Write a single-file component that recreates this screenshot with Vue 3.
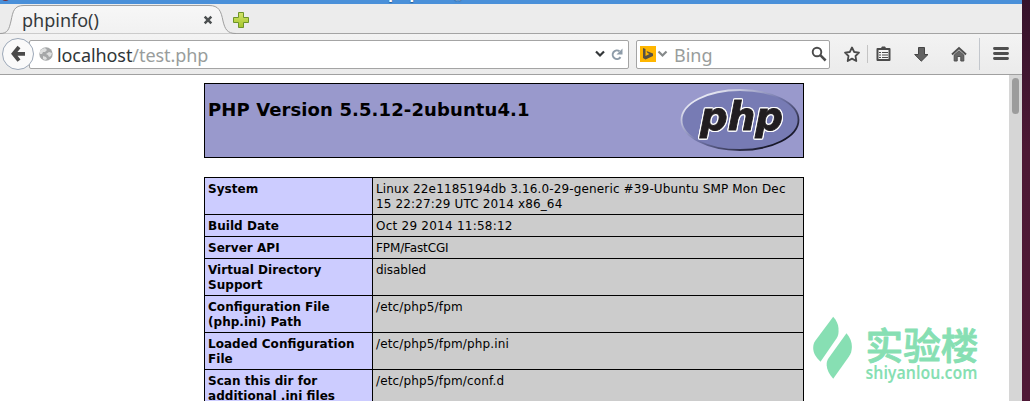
<script setup>
const rows = [
  ['System', 'Linux 22e1185194db 3.16.0-29-generic #39-Ubuntu SMP Mon Dec 15 22:27:29 UTC 2014 x86_64'],
  ['Build Date', 'Oct 29 2014 11:58:12'],
  ['Server API', 'FPM/FastCGI'],
  ['Virtual Directory Support', 'disabled'],
  ['Configuration File (php.ini) Path', '/etc/php5/fpm'],
  ['Loaded Configuration File', '/etc/php5/fpm/php.ini'],
  ['Scan this dir for additional .ini files', '/etc/php5/fpm/conf.d'],
]
</script>

<template>
  <div class="desktop">
    <div class="window">
      <div class="titlebar"><i class="close-dot"></i><span class="title">phpinfo()</span></div>

      <div class="tabs">
        <svg class="tab-shape" width="260" height="30" viewBox="0 0 260 30">
          <defs>
            <linearGradient id="tabFill" x1="0" y1="0" x2="0" y2="1">
              <stop offset="0" stop-color="#f7f7f7" /><stop offset="1" stop-color="#f1f1f1" />
            </linearGradient>
            <linearGradient id="plusFill" x1="0" y1="0" x2="0" y2="1">
              <stop offset="0" stop-color="#d3e36a" /><stop offset="1" stop-color="#a5c62c" />
            </linearGradient>
          </defs>
          <path d="M0 29.5C8 29.5 9 25 11 17C13 7 14 1.500 24 1.500H209C219 1.500 221 7 223 17C225 25 227 29.500 236 29.500" fill="url(#tabFill)" stroke="#9e9e9e" />
          <path d="M204.700 12.700L211.300 19.300M211.300 12.700L204.700 19.300" stroke="#4b4f50" stroke-width="2.500" />
          <path d="M238.500 8.500h5v5h5v5h-5v5h-5v-5h-5v-5h5z" fill="url(#plusFill)" stroke="#6d9428" />
        </svg>
        <span class="tab-label">phpinfo()</span>
      </div>

      <div class="toolbar">
        <svg class="back" width="34" height="34" viewBox="0 0 34 34">
          <circle cx="17" cy="17" r="15.500" fill="#fafafa" stroke="#9ca8b8" />
          <path d="M18 10L12.500 16.800L18 23.600M13 16.800H24" fill="none" stroke="#4a4a4a" stroke-width="3.800" />
        </svg>
        <div class="urlbar">
          <svg class="globe" width="14" height="14" viewBox="0 0 14 14">
            <circle cx="7" cy="7" r="6.700" fill="#a5a7a8" />
            <path d="M1 4L3 2L6 1L8 3L6 5L4 5L3 7L1 7ZM7 7L10 5L13 6L12 9L10 10L9 8ZM4 9L7 10L8 12L6 13L4 12Z" fill="#dedfdf" />
          </svg>
          <span class="url">localhost<span class="path">/test.php</span></span>
          <svg class="url-icons" width="30" height="16" viewBox="0 0 30 16">
            <path d="M1 5.500L5 9.500L9 5.500" fill="none" stroke="#333739" stroke-width="2.200" />
            <path d="M24.500 5.200A4.300 4.300 0 1 0 25.500 11.200" fill="none" stroke="#8d9ba8" stroke-width="2" />
            <path d="M27.500 2.500V8.500H21.500Z" fill="#8d9ba8" />
          </svg>
        </div>
        <div class="search">
          <svg width="28" height="16" viewBox="0 0 28 16">
            <path d="M0 0H16V16H0Z" fill="#ffb600" />
            <path d="M3 2L5.500 3V10L9.500 8L7.500 7L6.500 5L13 7.500V10L5.500 13.500L3 12Z" fill="#565144" />
            <path d="M18.500 5.500L22.500 9.500L26.500 5.500" fill="none" stroke="#85898a" stroke-width="2.200" />
          </svg>
          <span class="engine">Bing</span>
          <svg class="lens" width="16" height="17" viewBox="0 0 16 17">
            <circle cx="6" cy="6" r="4.300" fill="none" stroke="#4b4b4b" stroke-width="1.900" />
            <path d="M9.300 9.200L14.600 14.500" stroke="#4b4b4b" stroke-width="2.500" />
          </svg>
        </div>
        <svg class="tools" width="192" height="34" viewBox="0 0 192 34">
          <path d="M22 10.500L24.200 15L29 15.700L25.500 19L26.300 24L22 21.600L17.700 24L18.500 19L15 15.700L19.800 15Z" fill="#f8f8f8" stroke="#4b4b4b" stroke-width="1.800" stroke-linejoin="round" />
          <path d="M37.500 8V26" stroke="#c4c4c4" />
          <path d="M47.500 12H59.500V23H47.500Z" fill="#f4f4f4" stroke="#4b4b4b" stroke-width="2" stroke-linejoin="round" />
          <path d="M49.500 11.500V11H51L52 9.500H55L56 11H57.500V13H49.500Z" fill="#4b4b4b" />
          <path d="M49 15.500H51M52 15.500H58M49 18H51M52 18H58M49 20.500H51M52 20.500H58" stroke="#4b4b4b" stroke-width="1.200" />
          <path d="M88.500 10.500H94.500V17.500H98L91.300 24.200L84.700 17.500H88.500Z" fill="#626262" stroke="#454545" />
          <path d="M122 17.500L129 11L136 17.500" fill="none" stroke="#4f4f4f" stroke-width="2" />
          <path d="M124.200 18L129 13.700L133.800 18V24H130.800V19.500H127.200V24H124.200Z" fill="#686868" stroke="#4f4f4f" />
          <path d="M149.500 1V33" stroke="#c3c7cd" />
          <path d="M164.500 11.500H177.500M164.500 16.500H177.500M164.500 21.500H177.500" stroke="#4f4f4f" stroke-width="2.900" stroke-linecap="round" />
        </svg>
      </div>

      <div class="viewport">
        <div class="page">
          <div class="banner">
            <h1>PHP Version 5.5.12-2ubuntu4.1</h1>
            <svg width="120" height="64" viewBox="0 0 120 64">
              <defs>
                <linearGradient id="rim" x1="0" y1="0" x2="1" y2="1">
                  <stop offset="0.150" stop-color="#e6e7f2" /><stop offset="0.480" stop-color="#7478ad" /><stop offset="0.850" stop-color="#171728" />
                </linearGradient>
              </defs>
              <ellipse cx="60" cy="32" rx="58.500" ry="30" fill="#777bb4" stroke="url(#rim)" stroke-width="1.800" />
              <text class="php" x="20" y="41.800" textLength="83" lengthAdjust="spacingAndGlyphs">php</text>
            </svg>
          </div>
          <table>
            <tbody>
              <tr v-for="row in rows" :key="row[0]">
                <th>{{ row[0] }}</th>
                <td>{{ row[1] }}</td>
              </tr>
            </tbody>
          </table>
        </div>
        <div class="scrollbar"><div class="thumb"></div></div>
      </div>
    </div>

    <svg class="watermark" width="170" height="70" viewBox="0 0 170 70">
      <path d="M22.200 0.700C25.500 4.500 27.300 8 27.500 12.500C27.700 17 27.500 19.500 25.500 22.500L9.500 45.700C5 41.500 2.200 37 2.200 32C2.200 28.500 2.800 27 4.500 24.500Z" />
      <path d="M35.500 17.300C39 21.500 41 26 40.900 31C40.700 35 40 37.500 38 40.500L22.200 62.700C18 58 16 54 15.700 49.500C15.500 46 16 44.500 17.700 42Z" />
      <text class="cn" x="54.500" y="44" textLength="113" lengthAdjust="spacingAndGlyphs">实验楼</text>
      <text class="domain" x="54.500" y="63" textLength="112" lengthAdjust="spacingAndGlyphs">shiyanlou.com</text>
    </svg>
  </div>
</template>

<style>
body { margin: 0; overflow: hidden; }
</style>

<style scoped>
.desktop {
  position: relative;
  width: 1030px;
  height: 401px;
  overflow: hidden;
  background: linear-gradient(#36132c, #4d1835 150px, #4f1836);
}
.window { width: 1022px; height: 401px; display: flex; flex-direction: column; background: #ececec; }
.titlebar { position: relative; height: 4px; flex: none; overflow: hidden; background: #4a90d9; }
.title {
  position: absolute; left: 388px; bottom: 2px;
  font: bold 16.500px/20px "Open Sans", sans-serif; color: #fff; text-shadow: 0 1px 1px #285a91;
}
.close-dot { position: absolute; left: 0; bottom: 3px; width: 11px; height: 12px; border-radius: 50%; background: #762b39; }
.tabs { position: relative; height: 30px; flex: none; box-sizing: border-box; border-bottom: 1px solid #a4a4a4; }
.tab-shape { display: block; }
.tab-label { position: absolute; left: 22px; top: 4px; font: 18px/25px "Noto Sans", sans-serif; color: #353a3c; }
.toolbar {
  height: 41px; flex: none; box-sizing: border-box; display: flex; align-items: center;
  border-bottom: 1px solid #a0a0a0; background: linear-gradient(#f3f3f3, #ebebeb);
}
.back { flex: none; margin-left: 1px; position: relative; z-index: 1; }
.urlbar, .search {
  box-sizing: border-box; height: 29px; display: flex; align-items: center;
  background: #fff; border: 1px solid #a4a4a4; border-radius: 2px;
}
.urlbar { width: 600px; margin-left: -6px; padding: 0 3px 0 9px; }
.globe { margin-right: 4px; }
.url { flex: 1; padding-top: 2px; font: 18px/25px "Noto Sans", sans-serif; letter-spacing: -0.080px; color: #303638; white-space: nowrap; }
.path { color: #999d9c; }
.search { width: 194px; margin-left: 7px; padding: 0 2px 0 3px; }
.engine { flex: 1; margin-left: 6px; padding-top: 2px; font: 18px/25px "Noto Sans", sans-serif; color: #999d9c; }
.tools { flex: none; }
.viewport { height: 326px; flex: none; display: flex; background: #fff; overflow: hidden; }
.page { width: 600px; margin-left: 204px; padding-top: 8px; font-family: "DejaVu Sans", sans-serif; color: #000; }
.banner {
  box-sizing: border-box; height: 75px; margin-bottom: 19px; padding: 4px 3px;
  display: flex; justify-content: space-between; border: 1px solid #000; background: #9999cc;
}
h1 { margin: 11px 0 0; font-size: 18px; line-height: 22px; letter-spacing: 0.110px; white-space: nowrap; }
.php {
  font: italic bold 38.500px "DejaVu Sans", sans-serif; fill: #211d20;
  stroke: #211d20; stroke-width: 0.900px;
  filter: drop-shadow(1px 0 0 #fff) drop-shadow(-1px 0 0 #fff) drop-shadow(0 1px 0 #fff) drop-shadow(0 -1px 0 #fff);
}
table { width: 600px; table-layout: fixed; border-collapse: collapse; font-size: 12px; line-height: 15px; }
th, td { padding: 4px 3px 2px; border: 1px solid #000; text-align: left; vertical-align: top; }
th { box-sizing: border-box; width: 168px; background: #ccccff; letter-spacing: 0.040px; font-variant-ligatures: common-ligatures; font-feature-settings: "liga" 1; }
td { background: #cccccc; letter-spacing: 0.150px; }
tr:nth-child(2) td { letter-spacing: 0.240px; }
tr:nth-child(3) td { letter-spacing: -0.120px; }
tr:nth-child(4) td { letter-spacing: -0.050px; }
.scrollbar { width: 13px; margin-left: auto; background: #d6d6d6; display: flex; justify-content: center; }
.thumb { width: 7px; height: 36px; margin-top: 3px; border-radius: 4px; background: #9c9c9c; }
.watermark { position: absolute; left: 811px; top: 316px; fill: #87dfb3; }
.cn { font: 500 37px "Noto Sans CJK SC", sans-serif; stroke: #87dfb3; stroke-width: 0.900px; stroke-linejoin: round; }
.domain { font: 600 17px "Noto Sans", sans-serif; }
</style>
